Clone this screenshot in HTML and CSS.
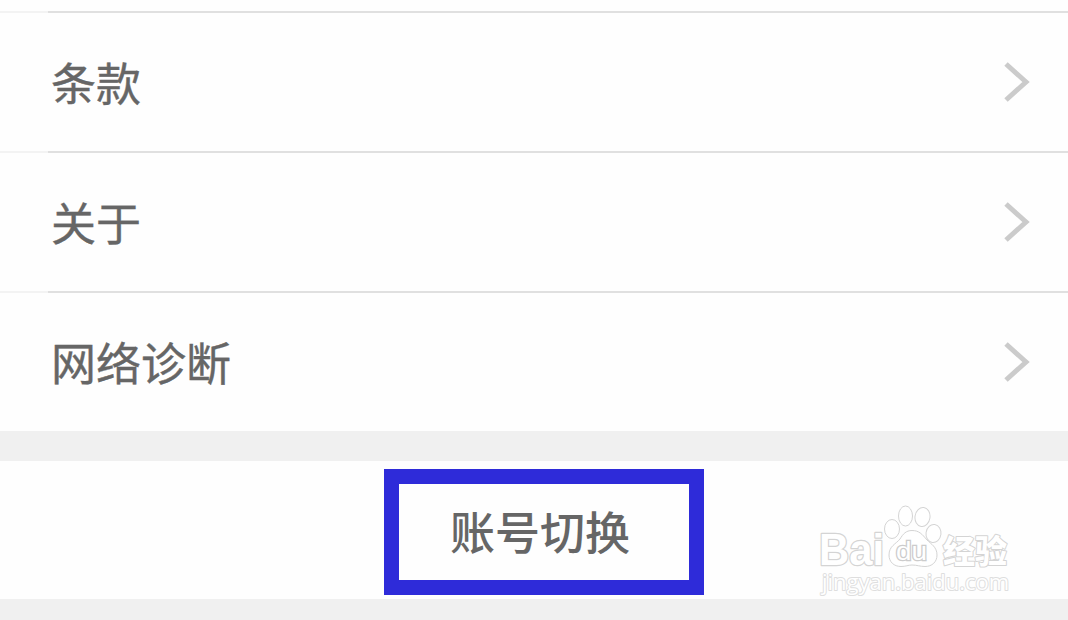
FILE: index.html
```html
<!DOCTYPE html>
<html lang="zh-CN">
<head>
  <meta charset="UTF-8" />
  <meta name="viewport" content="width=device-width, initial-scale=1.0"/>
  <title>设置</title>
  <link rel="stylesheet" href="styles.css">
</head>
<body>

  <!-- Settings list -->
  <div class="list">
    <a class="row" href="#">
      <span>条款</span>
      <svg class="arrow" viewBox="0 0 26 42"><path d="M2 3 L22 21 L2 39"/></svg>
    </a>
    <a class="row" href="#">
      <span>关于</span>
      <svg class="arrow" viewBox="0 0 26 42"><path d="M2 3 L22 21 L2 39"/></svg>
    </a>
    <a class="row" href="#">
      <span>网络诊断</span>
      <svg class="arrow" viewBox="0 0 26 42"><path d="M2 3 L22 21 L2 39"/></svg>
    </a>
  </div>

  <!-- Switch account -->
  <div class="account">
    <button class="switch-btn" type="button">账号切换</button>
  </div>

  <svg class="watermark" viewBox="0 0 208 112">
    <text class="logo" x="9" y="75" textLength="65" lengthAdjust="spacingAndGlyphs">Bai</text>
    <g class="paw">
      <ellipse cx="82" cy="39" rx="7.5" ry="9.5"/>
      <ellipse cx="95.5" cy="26" rx="7" ry="10"/>
      <ellipse cx="112.5" cy="27" rx="7.5" ry="9.5" transform="rotate(8 112.5 27)"/>
      <ellipse cx="123.5" cy="43.5" rx="7.5" ry="9" transform="rotate(8 123.5 43.5)"/>
      <path d="M102 40.5 C96 40.5 93 44 90 49 C86 54 79 56 79 65 C79 72 84 76.500 91 76.500 C96 76.500 98 75 102 75 C107 75 110 76.500 115 76.500 C122 76.500 127 72 127 65 C127 57 121 54 117 50 C112 44 109 40.500 102 40.500 Z"/>
    </g>
    <text class="du" x="86" y="70" textLength="31" lengthAdjust="spacingAndGlyphs">du</text>
    <text class="name" x="133" y="72.500" textLength="64" lengthAdjust="spacingAndGlyphs">经验</text>
    <text class="site" x="12" y="100" textLength="187" lengthAdjust="spacingAndGlyphs">jingyan.baidu.com</text>
  </svg>

</body>
</html>
```
FILE: styles.css
```css
* {
  box-sizing: border-box;
}

body {
  background-color: #f0f0f0;
  font-family: "Noto Sans CJK SC", sans-serif;
  color: #666;
  margin: 0;
  height: 620px;
  overflow: hidden;
  position: relative;
}

.list {
  background-color: #fefefe;
  height: 431px;
  padding-top: 11px;
}

.row {
  display: flex;
  align-items: center;
  justify-content: space-between;
  height: 140px;
  padding: 2px 38px 0 51px;
  background: linear-gradient(to right, #f3f3f3 48px, #e0e0e0 48px) top / 100% 2px no-repeat;
  color: #666;
  font-size: 45px;
  line-height: 60px;
  text-decoration: none;
  -webkit-text-stroke: 0.4px #666;
}

.arrow {
  width: 26px;
  height: 42px;
  fill: none;
  stroke: #cbcbcb;
  stroke-width: 5;
}

.account {
  display: flex;
  justify-content: center;
  align-items: center;
  height: 138px;
  margin-top: 30px;
  padding: 4px 0 0 19px;
  background-color: #fefefe;
}

.switch-btn {
  width: 320px;
  height: 126px;
  margin: 0;
  padding: 0 7px 3px 0;
  border: 15px solid #2e2bd9;
  background-color: #fefefe;
  color: #666;
  font-family: inherit;
  font-size: 45px;
  font-weight: 500;
  line-height: 60px;
}

.watermark {
  position: absolute;
  left: 810px;
  top: 490px;
  width: 208px;
  height: 112px;
  fill: #fff;
  stroke: #d4d4d4;
  stroke-width: 1;
}

.logo,
.du {
  font-family: "Liberation Sans", sans-serif;
  font-weight: bold;
}

.logo {
  font-size: 44px;
  stroke-width: 2.5;
  stroke-linejoin: round;
  paint-order: stroke;
}

.du {
  font-size: 26px;
  font-weight: normal;
  stroke: #ccc;
  stroke-width: 2.5;
  paint-order: stroke;
}

.name {
  font-family: "Noto Sans CJK SC", sans-serif;
  font-size: 32px;
  font-weight: 900;
  stroke-width: 2;
  stroke-linejoin: round;
  paint-order: stroke;
}

.site {
  font-family: "Open Sans", sans-serif;
  font-size: 22px;
  stroke: #dedede;
  stroke-width: 2;
  stroke-linejoin: round;
  paint-order: stroke;
}
```
